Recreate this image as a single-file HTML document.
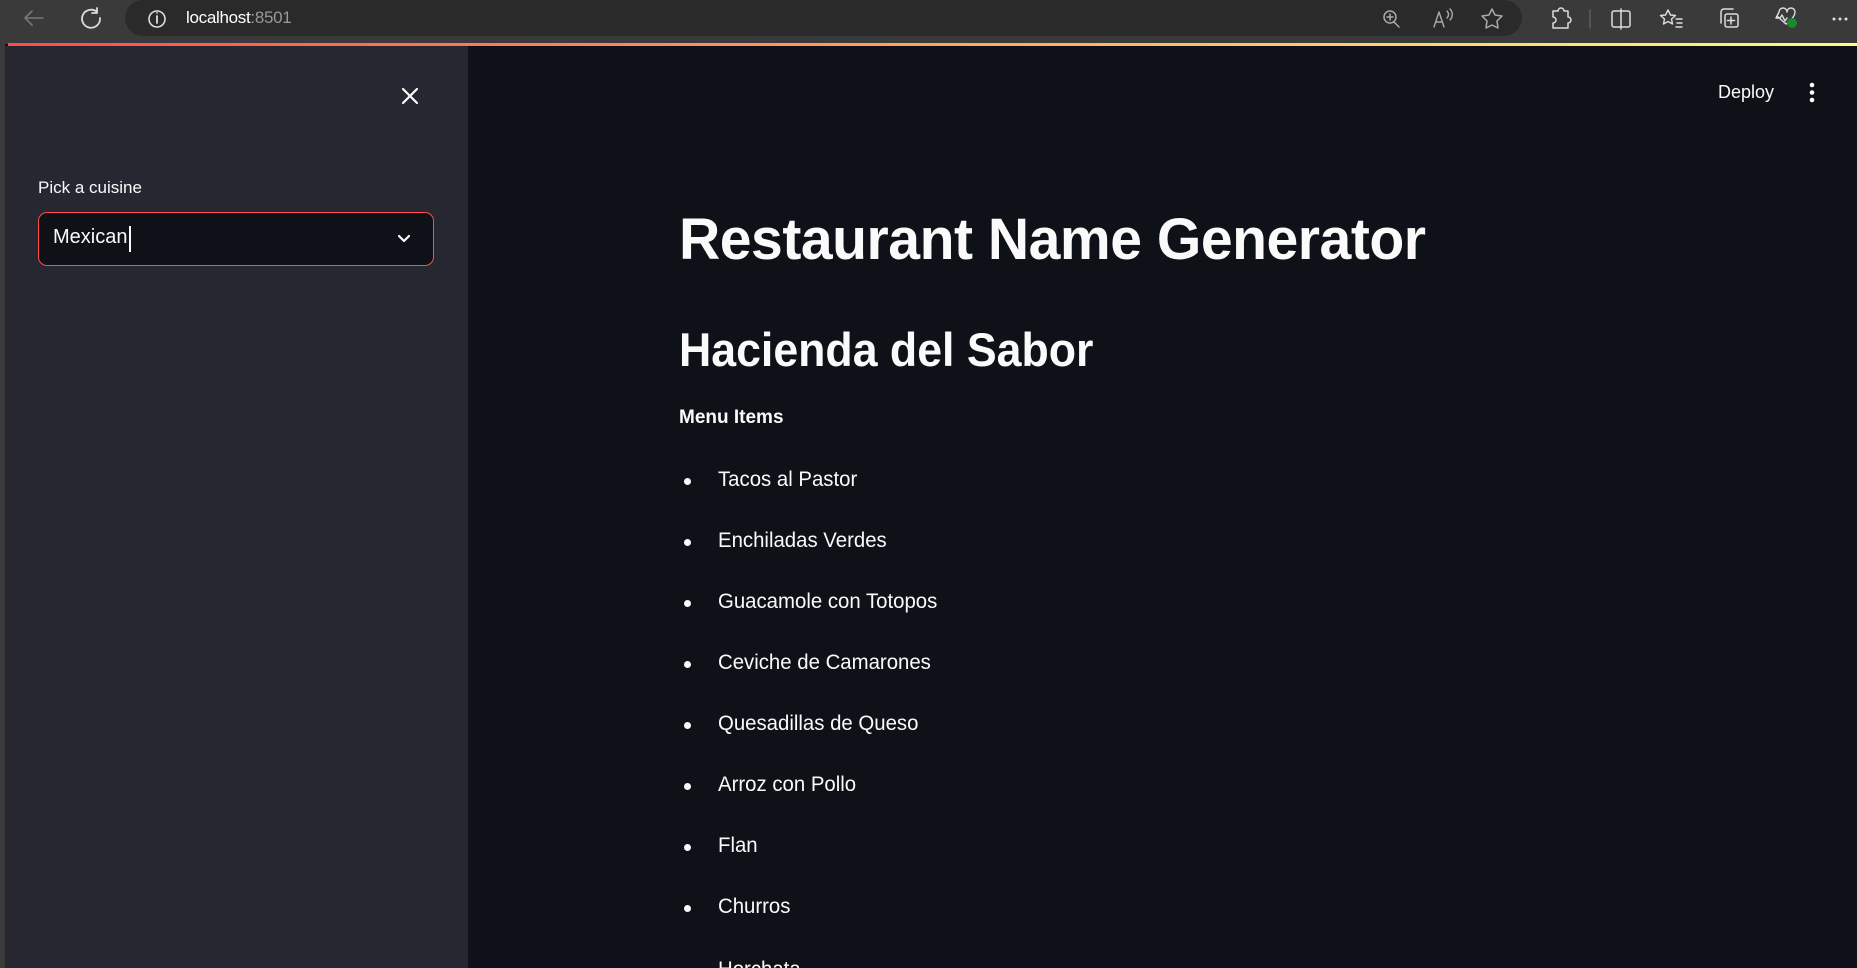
<!DOCTYPE html>
<html><head><meta charset="utf-8"><style>
*{margin:0;padding:0;box-sizing:border-box}
html,body{width:1857px;height:968px;overflow:hidden}
body{background:#0e1117;font-family:"Liberation Sans",sans-serif;color:#fafafa;position:relative}
.top{position:absolute;left:0;top:0;width:1857px;height:44px;background:#3a3a3a}
.pill{position:absolute;left:125px;top:0;width:1397px;height:36px;background:#2a2a2a;border-radius:18px}
.grad{position:absolute;left:8px;top:43px;width:1849px;height:3px;background:linear-gradient(90deg,#ff4b4b,#fffd80)}
.frame{position:absolute;left:0;top:44px;width:5px;height:924px;background:#3a3a3a}
.side{position:absolute;left:5px;top:46px;width:463px;height:922px;background:#262730}
.t{position:absolute;white-space:nowrap}
.sel{position:absolute;left:38px;top:212px;width:396px;height:54px;border:1px solid #ff4b4b;border-radius:9px;background:#0e1117}
.b{position:absolute;width:7px;height:7px;border-radius:50%;background:#fafafa;left:684px}
.li{left:718px;font-size:21px;transform:scaleX(0.97);transform-origin:left}
</style></head><body>
<div class="top"></div>
<div class="pill"></div>
<div class="t" style="left:186px;top:8px;font-size:17px;color:#fff;letter-spacing:-0.3px">localhost<span style="color:#999">:8501</span></div>
<svg style="position:absolute;left:0;top:0" width="1857" height="44" fill="none" stroke-linecap="round" stroke-linejoin="round">
<path d="M43 18H25M32 11l-7 7 7 7" stroke="#777" stroke-width="1.6"/>
<path d="M97 12a9 9 0 1 0 3 6M97 8v5h-5" stroke="#ddd" stroke-width="1.8"/>
<circle cx="157" cy="19" r="8" stroke="#ddd" stroke-width="1.6"/><path d="M157 16v7M157 13v0" stroke="#ddd" stroke-width="1.8"/>
<circle cx="1390" cy="17" r="6" stroke="#aaa" stroke-width="1.5"/><path d="M1394 22l5 5M1390 14v6M1387 17h6" stroke="#aaa" stroke-width="1.5"/>
<path d="M1434 27l5-15 5 15M1436 22h6M1447 11c2 2 2 5 0 7M1450 9c3 3 3 8 0 11" stroke="#aaa" stroke-width="1.4"/>
<path d="M1492 9l3 6 7 1-5 5 1 7-6-3-6 3 1-7-5-5 7-1z" stroke="#aaa" stroke-width="1.5"/>
<path d="M1553 11h5a3 3 0 0 1 6 0h4v6a3 3 0 0 1 0 6v5h-15v-5a3 3 0 0 0 0-6z" stroke="#ddd" stroke-width="1.5"/>
<path d="M1590 10v18" stroke="#666" stroke-width="1.2"/>
<rect x="1612" y="11" width="18" height="16" rx="2" stroke="#ddd" stroke-width="1.5"/><path d="M1621 9v20" stroke="#ddd" stroke-width="1.5"/>
<path d="M1668 10l2.5 5 5 .5-4 3.5 1 5-4.5-2.5-4.5 2.5 1-5-4-3.5 5-.5zM1676 19h6M1677 23h5M1676 27h6" stroke="#ddd" stroke-width="1.4"/>
<rect x="1725" y="14" width="13" height="13" rx="2" stroke="#ddd" stroke-width="1.5"/><path d="M1731 17v7M1727.5 20.5h7M1721 23V12a3 3 0 0 1 3-3h9" stroke="#ddd" stroke-width="1.5"/>
<path d="M1776 18l3-6a4 4 0 0 1 8 0 4 4 0 0 1 8 0c0 6-9 12-9 12l-9-8zM1776 18h4l2-3 3 6 2-3" stroke="#ddd" stroke-width="1.4"/>
<circle cx="1792" cy="23" r="5" fill="#1a8a2e" stroke="none"/>
<circle cx="1834" cy="19" r="1.5" fill="#ddd" stroke="none"/><circle cx="1840" cy="19" r="1.5" fill="#ddd" stroke="none"/><circle cx="1846" cy="19" r="1.5" fill="#ddd" stroke="none"/>
</svg>
<div class="grad"></div>
<div class="frame"></div>
<div class="side"></div>
<svg style="position:absolute;left:400px;top:86px" width="20" height="20"><path d="M3 3l14 14M17 3L3 17" stroke="#fafafa" stroke-width="2.2" stroke-linecap="round"/></svg>
<div class="t" style="left:38px;top:178px;font-size:17px;color:#fafafa">Pick a cuisine</div>
<div class="sel"></div>
<div class="t" style="left:53px;top:226px;font-size:20px">Mexican</div>
<div style="position:absolute;left:129px;top:226px;width:2px;height:26px;background:#fafafa"></div>
<svg style="position:absolute;left:396px;top:231px" width="16" height="16"><path d="M3 5l5 5 5-5" stroke="#fafafa" stroke-width="2.2" fill="none" stroke-linecap="round" stroke-linejoin="round"/></svg>
<div class="t" style="left:1718px;top:82px;font-size:18px">Deploy</div>
<svg style="position:absolute;left:1806px;top:82px" width="12" height="22"><circle cx="6" cy="3" r="2.3" fill="#fafafa"/><circle cx="6" cy="10.5" r="2.3" fill="#fafafa"/><circle cx="6" cy="18" r="2.3" fill="#fafafa"/></svg>
<div class="t" style="left:679px;top:206px;font-size:58px;font-weight:bold;transform:scaleX(0.985);transform-origin:left;letter-spacing:-0.5px">Restaurant Name Generator</div>
<div class="t" style="left:679px;top:322px;font-size:47px;font-weight:bold;transform:scaleX(0.95);transform-origin:left">Hacienda del Sabor</div>
<div class="t" style="left:679px;top:407px;font-size:19px;font-weight:bold">Menu Items</div>
<div class="b" style="top:478px"></div><div class="t li" style="top:468px">Tacos al Pastor</div>
<div class="b" style="top:539px"></div><div class="t li" style="top:529px">Enchiladas Verdes</div>
<div class="b" style="top:600px"></div><div class="t li" style="top:590px">Guacamole con Totopos</div>
<div class="b" style="top:661px"></div><div class="t li" style="top:651px">Ceviche de Camarones</div>
<div class="b" style="top:722px"></div><div class="t li" style="top:712px">Quesadillas de Queso</div>
<div class="b" style="top:783px"></div><div class="t li" style="top:773px">Arroz con Pollo</div>
<div class="b" style="top:844px"></div><div class="t li" style="top:834px">Flan</div>
<div class="b" style="top:905px"></div><div class="t li" style="top:895px">Churros</div>
<div class="t li" style="top:958px">Horchata</div>
</body></html>
